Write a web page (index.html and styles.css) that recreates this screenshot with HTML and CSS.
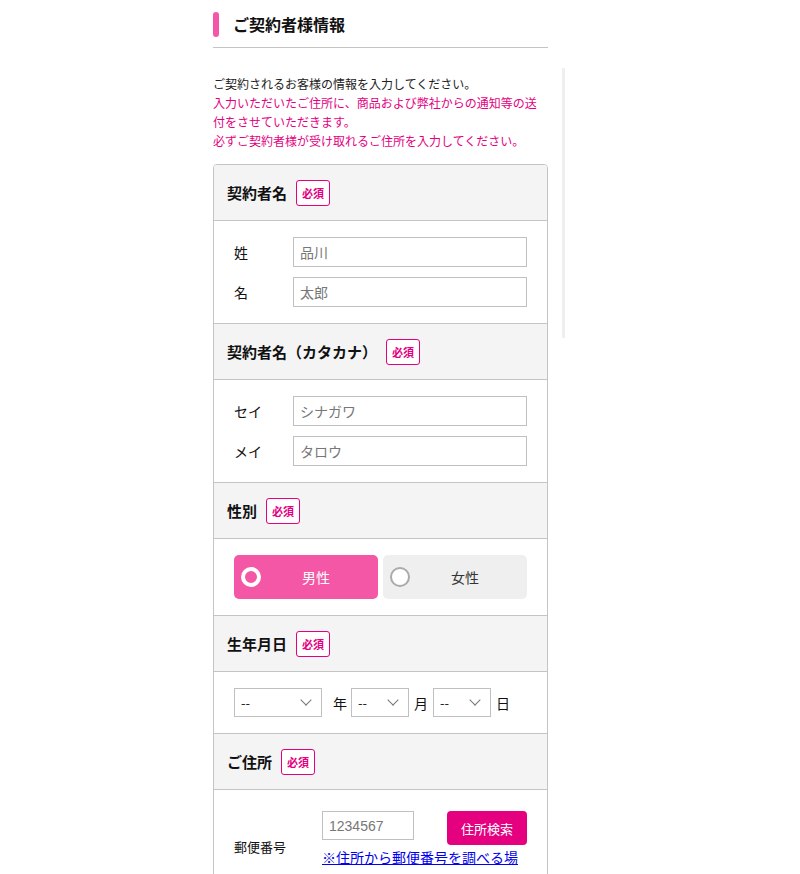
FILE: index.html
```html
<!DOCTYPE html>
<html lang="ja">
<head>
<meta charset="UTF-8" />
<meta name="viewport" content="width=device-width, initial-scale=1" />
<title>ご契約者様情報</title>
<link rel="stylesheet" href="styles.css">
</head>
<body>

<div class="page">
  <main class="main">
    <h2 class="page-title">ご契約者様情報</h2>

    <p class="intro">
      ご契約されるお客様の情報を入力してください。<br>
      <span class="notice">入力いただいたご住所に、商品および弊社からの通知等の送付をさせていただきます。<br>
      必ずご契約者様が受け取れるご住所を入力してください。</span>
    </p>

    <div class="form-box">
      <!-- 契約者名 -->
      <div class="sec-head">
        <span class="sec-title">契約者名</span><span class="badge">必須</span>
      </div>
      <div class="sec-body">
        <div class="field-row">
          <label class="field-label">姓</label>
          <input class="text-input" type="text" placeholder="品川" />
        </div>
        <div class="field-row">
          <label class="field-label">名</label>
          <input class="text-input" type="text" placeholder="太郎" />
        </div>
      </div>

      <!-- カタカナ -->
      <div class="sec-head">
        <span class="sec-title">契約者名（カタカナ）</span><span class="badge">必須</span>
      </div>
      <div class="sec-body">
        <div class="field-row">
          <label class="field-label">セイ</label>
          <input class="text-input" type="text" placeholder="シナガワ" />
        </div>
        <div class="field-row">
          <label class="field-label">メイ</label>
          <input class="text-input" type="text" placeholder="タロウ" />
        </div>
      </div>

      <!-- 性別 -->
      <div class="sec-head">
        <span class="sec-title">性別</span><span class="badge">必須</span>
      </div>
      <div class="sec-body">
        <div class="gender">
          <label class="gender-btn selected"><span class="radio"></span>男性</label>
          <label class="gender-btn"><span class="radio"></span>女性</label>
        </div>
      </div>

      <!-- 生年月日 -->
      <div class="sec-head">
        <span class="sec-title">生年月日</span><span class="badge">必須</span>
      </div>
      <div class="sec-body">
        <div class="birth">
          <span class="select-wrap year"><select><option>--</option></select></span>
          <span class="unit first">年</span>
          <span class="select-wrap"><select><option>--</option></select></span>
          <span class="unit">月</span>
          <span class="select-wrap"><select><option>--</option></select></span>
          <span class="unit">日</span>
        </div>
      </div>

      <!-- ご住所 -->
      <div class="sec-head">
        <span class="sec-title">ご住所</span><span class="badge">必須</span>
      </div>
      <div class="sec-body zip-body">
        <div class="zip-row">
          <label class="zip-label">郵便番号</label>
          <div class="zip-col">
            <div class="zip-line">
              <input class="zip-input" type="text" placeholder="1234567" />
              <button class="zip-btn" type="button">住所検索</button>
            </div>
            <a class="zip-link" href="#">※住所から郵便番号を調べる場合はこちら</a>
          </div>
        </div>
      </div>
    </div>
  </main>

  <div class="side-bar"></div>
</div>

</body>
</html>
```

FILE: styles.css
```css
:root {
  --pink: #e4007f;
  --pink-light: #f357a6;
  --line: #c4c4c4;
  --head-bg: #f4f4f4;
  --text: #222;
}
body {
  margin: 0;
  background: #fff;
  color: var(--text);
  font-family: "Noto Sans CJK JP", "Noto Sans", sans-serif;
}
.page {
  display: flex;
  align-items: flex-start;
  padding-left: 213px;
}
.main {
  width: 335px;
}
.side-bar {
  width: 3px;
  height: 270px;
  margin-top: 68px;
  margin-left: 14px;
  background: #efefef;
}

/* Titel */
.page-title {
  position: relative;
  margin: 0;
  padding: 11px 0 10px 20px;
  font-size: 16px;
  line-height: 26px;
  font-weight: bold;
  color: #111;
  border-bottom: 1px solid var(--line);
}
.page-title::before {
  content: "";
  position: absolute;
  left: 0;
  top: 12px;
  width: 6px;
  height: 25px;
  border-radius: 3px;
  background: var(--pink-light);
}
.intro {
  margin: 26px 0 14px;
  font-size: 12px;
  line-height: 19px;
  color: #222;
}
.notice {
  color: var(--pink);
}

/* Formular */
.form-box {
  border: 1px solid var(--line);
  border-radius: 4px 4px 0 0;
  overflow: hidden;
}
.sec-head {
  display: flex;
  align-items: center;
  height: 55px;
  padding: 0 13px;
  background: var(--head-bg);
  border-bottom: 1px solid var(--line);
}
.sec-title {
  font-size: 15px;
  font-weight: bold;
  color: #111;
  line-height: 20px;
}
.badge {
  margin-left: 9px;
  width: 32px;
  height: 24px;
  border: 1px solid var(--pink);
  border-radius: 3px;
  background: #fff;
  color: var(--pink);
  font-size: 11px;
  font-weight: bold;
  line-height: 24px;
  text-align: center;
}
.sec-body {
  padding: 16px 20px;
  border-bottom: 1px solid var(--line);
}
.field-row {
  display: flex;
  align-items: center;
}
.field-row + .field-row {
  margin-top: 10px;
}
.field-label {
  width: 59px;
  font-size: 14px;
  color: #111;
}
.text-input {
  flex: 1;
  height: 30px;
  box-sizing: border-box;
  border: 1px solid #c0c0c0;
  border-radius: 0;
  padding: 0 6px;
  font-family: inherit;
  font-size: 14px;
}
.text-input::placeholder,
.zip-input::placeholder {
  color: #777;
}

/* Geschlecht */
.gender {
  display: flex;
  gap: 5px;
}
.gender-btn {
  position: relative;
  flex: 1;
  height: 44px;
  padding-left: 20px;
  border-radius: 5px;
  background: #efefef;
  color: #333;
  font-size: 14px;
  display: flex;
  align-items: center;
  justify-content: center;
  cursor: pointer;
}
.gender-btn.selected {
  background: var(--pink-light);
  color: #fff;
}
.radio {
  position: absolute;
  left: 7px;
  top: 12px;
  width: 20px;
  height: 20px;
  box-sizing: border-box;
  border-radius: 50%;
  border: 2px solid #aaa;
  background: #fff;
}
.gender-btn.selected .radio {
  border: 4px solid #fff;
  background: var(--pink-light);
}

/* Geburtsdatum */
.birth {
  display: flex;
  align-items: center;
  font-size: 14px;
}
.select-wrap {
  position: relative;
  display: block;
  width: 58px;
}
.select-wrap.year {
  width: 88px;
}
.select-wrap select {
  appearance: none;
  width: 100%;
  height: 29px;
  box-sizing: border-box;
  border: 1px solid #c0c0c0;
  border-radius: 0;
  background: #fff;
  padding: 0 6px;
  font-family: inherit;
  font-size: 13px;
  color: #222;
}
.select-wrap::after {
  content: "";
  position: absolute;
  right: 12px;
  top: 8px;
  width: 7px;
  height: 7px;
  border-right: 1px solid #777;
  border-bottom: 1px solid #777;
  transform: rotate(45deg);
  pointer-events: none;
}
.unit {
  margin: 0 5px;
  color: #111;
}
.unit.first {
  margin-left: 11px;
  margin-right: 4px;
}

/* Adresse */
.zip-body {
  padding-top: 21px;
  border-bottom: none;
}
.zip-row {
  display: flex;
  align-items: flex-start;
}
.zip-label {
  width: 88px;
  margin-top: 26px;
  font-size: 13px;
  line-height: 20px;
  color: #111;
}
.zip-col {
  flex: 1;
}
.zip-line {
  display: flex;
  justify-content: space-between;
  align-items: flex-start;
}
.zip-input {
  width: 92px;
  height: 29px;
  box-sizing: border-box;
  border: 1px solid #c0c0c0;
  border-radius: 0;
  padding: 0 6px;
  font-family: "Liberation Sans", sans-serif;
  font-size: 14px;
}
.zip-btn {
  width: 80px;
  height: 34px;
  border: none;
  border-radius: 4px;
  background: var(--pink);
  color: #fff;
  font-family: inherit;
  font-size: 13px;
  cursor: pointer;
}
.zip-link {
  display: block;
  margin-top: 0;
  font-size: 14px;
  line-height: 24px;
  color: #0000ee;
  text-decoration: underline;
}
```
